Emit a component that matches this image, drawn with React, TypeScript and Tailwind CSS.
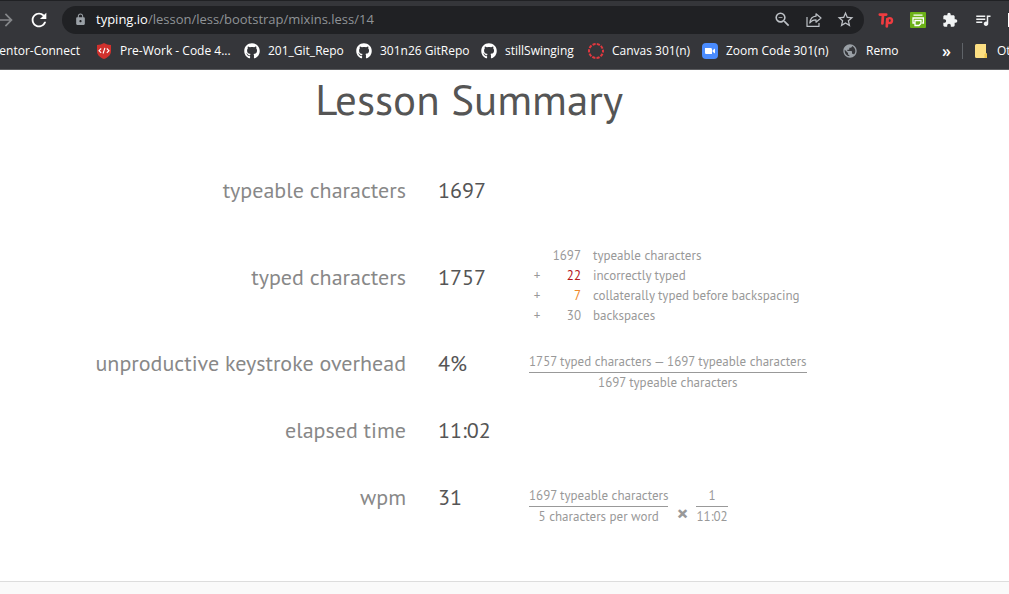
import type { ReactNode } from "react";
import { FaGithub } from "react-icons/fa";
import {
  MdArrowForward,
  MdExtension,
  MdLock,
  MdPublic,
  MdQueueMusic,
  MdRefresh,
  MdStarBorder,
  MdZoomOut,
} from "react-icons/md";

function ShareIcon() {
  return (
    <svg viewBox="0 0 16 16" className="size-4" fill="none" stroke="currentColor" strokeWidth="1.2" strokeLinejoin="round">
      <path d="M1 5v9.4h12V11" />
      <path d="M10 1.8 15 6l-5 4.2V7.8C7.200 7.800 5.200 8.700 3.800 11 4.200 7.200 6.200 4.500 10 4.200z" />
    </svg>
  );
}

function ShieldIcon() {
  return (
    <svg viewBox="0 0 16 16" className="size-4">
      <path d="M8 0c2 1.300 4.300 2 7 2v6c0 4-3 6.500-7 8-4-1.500-7-4-7-8V2c2.700 0 5-.7 7-2z" fill="#d0312d" />
      <path d="M5.200 5.500 3 7.700l2.200 2.200M10.800 5.500 13 7.700l-2.200 2.200M8.900 4.900 7.100 10.500" fill="none" stroke="#fff" strokeWidth="1.100" />
    </svg>
  );
}

function CanvasIcon() {
  return (
    <svg viewBox="0 0 16 16" className="size-4">
      <circle cx="8" cy="8" r="7" fill="none" stroke="#e0383f" strokeWidth="2" strokeDasharray="3.200 1.198" strokeDashoffset="1.600" />
    </svg>
  );
}

function ZoomIcon() {
  return (
    <svg viewBox="0 0 16 16" className="size-4">
      <rect width="16" height="16" rx="4" fill="#4a8cff" />
      <path d="M3 5h5.500c1 0 1.500.5 1.500 1.500V11H4.500C3.500 11 3 10.500 3 9.500zM10.600 7.200 13 5.400v5.200l-2.400-1.800z" fill="#fff" />
    </svg>
  );
}

function FolderIcon() {
  return (
    <svg viewBox="0 0 12 14" className="h-[14px] w-3 shrink-0">
      <path d="M0 1.500Q0 0 1.500 0H11v9l1 1v4H1.500Q0 14 0 12.500z" fill="#fcdf83" />
      <path d="M9.500 14v-3.500L11 9l1 1v4z" fill="#f0c64c" />
    </svg>
  );
}

function TpIcon() {
  return (
    <svg viewBox="0 0 16 16" className="size-4" fill="none" stroke="#ef3c40" strokeWidth="2.700" strokeLinecap="round" strokeLinejoin="round">
      <path d="M1.800 2.600h6.400M5 2.600 4.400 11.500" />
      <path d="M9.300 7.200 8.800 14.300" />
      <ellipse cx="11.700" cy="8.600" rx="2.300" ry="2.500" strokeWidth="2.400" />
    </svg>
  );
}

function PrintIcon() {
  return (
    <svg viewBox="0 0 16 16" className="size-4">
      <rect width="16" height="16" rx="1" fill="#6cb117" />
      <path d="M3.500 3.200h9M4.500 11H3V6h10.400v5h-1.200M5 8.500h6v3l-2 2H5z" fill="none" stroke="#fff" strokeWidth="1.300" />
    </svg>
  );
}

const github = <FaGithub className="size-4" />;

const bookmarks: { label: string; icon: ReactNode; width: string }[] = [
  { label: "Pre-Work - Code 4...", icon: <ShieldIcon />, width: "w-[148px]" },
  { label: "201_Git_Repo", icon: github, width: "w-[112px]" },
  { label: "301n26 GitRepo", icon: github, width: "w-[125px]" },
  { label: "stillSwinging", icon: github, width: "w-[107px]" },
  { label: "Canvas 301(n)", icon: <CanvasIcon />, width: "w-[114px]" },
  { label: "Zoom Code 301(n)", icon: <ZoomIcon />, width: "w-[140px]" },
  { label: "Remo", icon: <MdPublic className="size-4 text-[#9aa0a6]" />, width: "w-[64px]" },
];

function Browser() {
  return (
    <header className="overflow-hidden border-t border-b border-t-[#202124] border-b-[#5b5c5f] bg-[#35363a] font-['Open_Sans','Noto_Sans',sans-serif] text-white">
      <div className="flex h-[37px] items-center">
        <button aria-label="Forward" className="-ml-1 mr-3 text-[#85878a]">
          <MdArrowForward className="size-5" />
        </button>
        <button aria-label="Reload" className="mr-3">
          <MdRefresh className="size-[22px]" />
        </button>
        <div className="flex h-7 flex-1 items-center rounded-full bg-[#202124] pr-[9px] pl-3 text-[#bdc1c6]">
          <MdLock className="size-[13px] text-[#9aa0a6]" />
          <a href="#address" className="ml-[9px] flex-1 text-[13px] text-[#8f9397]">
            <span className="text-white">typing.io</span>/lesson/less/bootstrap/mixins.less/14
          </a>
          <div className="flex items-center gap-[14px]">
            <button aria-label="Zoom"><MdZoomOut className="size-[19px]" /></button>
            <button aria-label="Share"><ShareIcon /></button>
            <button aria-label="Bookmark"><MdStarBorder className="size-[19px]" /></button>
          </div>
        </div>
        <div className="flex w-[145px] items-center gap-4 overflow-hidden pl-[14px] text-[#f1f3f4]">
          <button aria-label="Tp" className="shrink-0"><TpIcon /></button>
          <button aria-label="Print" className="shrink-0"><PrintIcon /></button>
          <button aria-label="Extensions" className="shrink-0"><MdExtension className="size-4" /></button>
          <button aria-label="Media" className="shrink-0"><MdQueueMusic className="size-[18px]" /></button>
          <button aria-label="Side panel" className="size-[14px] shrink-0 bg-white" />
        </div>
      </div>
      <nav className="flex h-[31px] items-start pt-1 text-[12px] leading-[18px]">
        <a href="#mentor" className="flex w-[96px] shrink-0 justify-end pr-4 whitespace-nowrap">Mentor-Connect</a>
        {bookmarks.map((b) => (
          <a key={b.label} href="#bookmark" className={`flex shrink-0 items-center gap-2 whitespace-nowrap ${b.width}`}>
            {b.icon}
            {b.label}
          </a>
        ))}
        <div className="ml-auto flex w-[67px] shrink-0 items-center overflow-hidden whitespace-nowrap">
          <button aria-label="More bookmarks" className="w-5 shrink-0 text-left text-[16px] leading-[18px] font-semibold">»</button>
          <span className="mr-3 h-4 w-px shrink-0 bg-[#5f6368]" />
          <a href="#other" className="flex shrink-0 items-center gap-[10px]"><FolderIcon />Other bookmarks</a>
        </div>
      </nav>
    </header>
  );
}

function Fraction({ top, bottom }: { top: string; bottom: string }) {
  return (
    <span className="inline-flex flex-col text-center">
      <span className="border-b border-[#999]">{top}</span>
      <span>{bottom}</span>
    </span>
  );
}

const terms = [
  { sign: "", count: "1697", label: "typeable characters", color: "" },
  { sign: "+", count: "22", label: "incorrectly typed", color: "text-[#b5161c]" },
  { sign: "+", count: "7", label: "collaterally typed before backspacing", color: "text-[#ef8a2b]" },
  { sign: "+", count: "30", label: "backspaces", color: "" },
];

const rows: { label: string; value: string; note?: ReactNode }[] = [
  { label: "typeable characters", value: "1697" },
  {
    label: "typed characters",
    value: "1757",
    note: (
      <ul className="pb-1">
        {terms.map((t) => (
          <li key={t.label} className="flex">
            <span className="w-4 text-center">{t.sign}</span>
            <span className={`w-9 text-right ${t.color}`}>{t.count}</span>
            <span className="ml-3">{t.label}</span>
          </li>
        ))}
      </ul>
    ),
  },
  {
    label: "unproductive keystroke overhead",
    value: "4%",
    note: <Fraction top="1757 typed characters — 1697 typeable characters" bottom="1697 typeable characters" />,
  },
  { label: "elapsed time", value: "11:02" },
  {
    label: "wpm",
    value: "31",
    note: (
      <div className="flex items-end">
        <Fraction top="1697 typeable characters" bottom="5 characters per word" />
        <span className="w-7 pb-1 text-center text-[22px] font-bold">×</span>
        <Fraction top="1" bottom="11:02" />
      </div>
    ),
  },
];

export default function App() {
  return (
    <div className="flex min-h-screen flex-col bg-white font-['PT_Sans','Noto_Sans',sans-serif]">
      <Browser />
      <main className="w-[93%] pb-[50px]">
        <h1 className="pt-px pb-[30px] text-center text-[43px] leading-[56px] text-[#555]">Lesson Summary</h1>
        <table className="w-full">
          <tbody>
            {rows.map((r) => (
              <tr key={r.label} className="h-[67px]">
                <th scope="row" className="w-[406px] text-right text-[22px] font-normal whitespace-nowrap text-[#888]">{r.label}</th>
                <td className="w-[123px] pl-8 text-[22px] text-[#555]">{r.value}</td>
                <td className="pt-[22px] align-top text-[13px] leading-5 whitespace-nowrap text-[#999]">{r.note}</td>
              </tr>
            ))}
          </tbody>
        </table>
      </main>
      <footer className="flex-1 border-t border-[#ddd] bg-[#fafafa]" />
    </div>
  );
}
